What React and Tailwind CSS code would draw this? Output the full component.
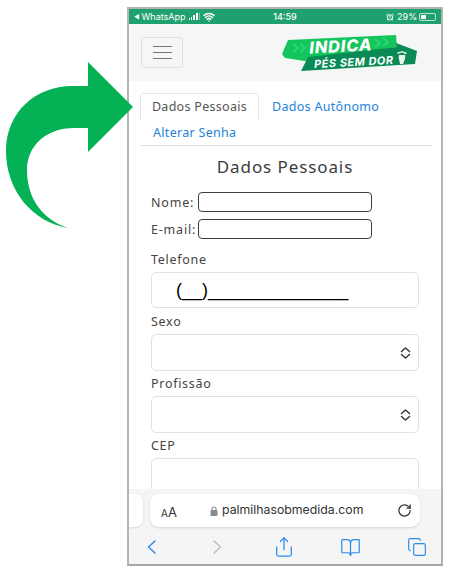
import { Share, BookOpen, Copy, RotateCw, Wifi, AlarmClock } from 'lucide-react';

function CurvedArrow() {
  return (
    <svg width="128" height="240" viewBox="0 0 128 240" className="block overflow-visible">
      <path
        d="M88 62 L133 107 L88 152 L88 128 L74 128 C46 128 27 146 27 170 C27 200 44 220 68 228 C32 222 6 190 6 151 C6 112 36 86 72 86 L88 86 Z"
        fill="#04b255"
      />
    </svg>
  );
}

function Logo() {
  return (
    <svg width="140" height="40" viewBox="280 32 140 40" className="block">
      <polygon points="282,53 288,39 396,34 397,46 305,60 285,57" fill="#12c65c" />
      <path d="M293 43 L298 47 L293 51 M300 43 L305 47 L300 51 M375 38 L380 42 L375 46 M383 37 L388 41 L383 45" fill="none" stroke="#2ed474" strokeWidth="2" />
      <polygon points="308,56 397,46 396,42 417,50 415,63 301,70" fill="#0a8a55" />
      <text x="341" y="51" textAnchor="middle" transform="rotate(-3 341 51)" fill="#fff" fontSize="16.5" fontWeight="800" fontStyle="italic" letterSpacing="0.8" fontFamily="Inter, sans-serif">INDICA</text>
      <text x="354" y="65" textAnchor="middle" transform="rotate(-3 354 65)" fill="#fff" fontSize="11" fontWeight="700" fontStyle="italic" letterSpacing="0.5" fontFamily="Inter, sans-serif">PÉS SEM DOR</text>
      <path d="M399 54 C398 58 400 60 400 63 L403 63 C404 60 406 57 405 54 Z" fill="#e8f5ee" />
      <path d="M398 52 L400 51.5 M401 51 L403 51 M404 51.5 L406 52.5" stroke="#e8f5ee" strokeWidth="1.4" strokeLinecap="round" />
    </svg>
  );
}

function StatusBar() {
  return (
    <div className="h-[15px] bg-[#1fa16f] flex items-center justify-between text-white text-[9px] pl-[5px] pr-[5px] shrink-0 font-['Inter']">
      <div className="flex items-center w-[120px]">
        <span className="text-[6px] mr-[2px]">◀</span>
        <span>WhatsApp</span>
        <span className="flex items-end gap-[1px] ml-[3px] h-[7px]">
          <span className="w-[1px] h-[2px] bg-white" />
          <span className="w-[1px] h-[3px] bg-white" />
          <span className="w-[2px] h-[5px] bg-white" />
          <span className="w-[2px] h-[7px] bg-white" />
          <span className="w-[1px] h-[7px] bg-white/40" />
        </span>
        <Wifi size={12} strokeWidth={3} className="ml-[3px]" />
      </div>
      <span className="font-medium">14:59</span>
      <div className="flex items-center justify-end w-[120px]">
        <AlarmClock size={8} strokeWidth={3} className="mr-[3px]" />
        <span>29%</span>
        <span className="ml-[2px] w-[17px] h-[8px] border border-white/70 rounded-[2px] p-[1px] flex">
          <span className="w-[5px] bg-white rounded-[1px]" />
        </span>
      </div>
    </div>
  );
}

function FieldLabel({ children }) {
  return <div className="text-[12.5px] text-[#444] tracking-[0.7px] leading-[20px] -mb-[2px] font-['Noto_Sans']">{children}</div>;
}

function SelectBox() {
  return (
    <div className="h-[37px] w-[268px] border border-[#dee2e6] rounded-[5px] bg-white flex items-center justify-end pr-[7px] mt-[4px] mb-[3px]">
      <svg width="11" height="14" viewBox="0 0 11 14" fill="none" stroke="#343a40" strokeWidth="1.6" strokeLinecap="round" strokeLinejoin="round">
        <path d="M1.5 5.5 L5.5 2 L9.5 5.5" />
        <path d="M1.5 8.5 L5.5 12 L9.5 8.5" />
      </svg>
    </div>
  );
}

function InlineField({ label }) {
  return (
    <div className="flex items-center h-[20px]">
      <span className="w-[47px] pt-[2px] text-[12.5px] text-[#444] tracking-[0.8px] font-['Noto_Sans'] whitespace-nowrap">{label}</span>
      <div className="w-[174px] h-[20px] border-[1.5px] border-[#3f3f3f] rounded-[4px] bg-white" />
    </div>
  );
}

function ToolbarSlot({ children }) {
  return <div className="w-[24px] flex items-center justify-center">{children}</div>;
}

export default function App() {
  return (
    <div className="w-[451px] h-[571px] bg-white flex overflow-hidden">
      <div className="w-[127px] shrink-0 relative z-10">
        <CurvedArrow />
      </div>
      <div className="w-[316px] h-[559px] mt-[7px] border-2 border-[#b4b4b4] border-b-[#a8a8a8] flex flex-col overflow-hidden shrink-0">
        <StatusBar />
        <div className="h-[57px] bg-[#f5f7f7] shrink-0 flex items-center pl-[12px] pr-[21px] justify-between">
          <div className="w-[42px] h-[31px] border border-[#e0e0e0] rounded-[4px] flex flex-col items-center justify-center gap-[4.5px]">
            <span className="w-[19px] h-[1.5px] bg-[#777]" />
            <span className="w-[19px] h-[1.5px] bg-[#777]" />
            <span className="w-[19px] h-[1.5px] bg-[#777]" />
          </div>
          <Logo />
        </div>
        <div className="flex-1 min-h-0 overflow-hidden pl-[11px] pr-[9px]">
          <div className="border-b border-[#dee2e6] h-[53px] mt-[12px] font-['Noto_Sans'] text-[12.5px] tracking-[0.3px]">
            <div className="flex h-[28px]">
              <div className="w-[119px] h-[28px] border border-b-0 border-[#e3e6e8] rounded-t-[4px] text-[#555] flex items-center justify-center">Dados Pessoais</div>
              <div className="ml-[13px] text-[#2483d8] flex items-center">Dados Autônomo</div>
            </div>
            <div className="pl-[13px] text-[#2483d8] h-[25px] flex items-center">Alterar Senha</div>
          </div>
          <div className="pl-[11px]">
            <h2 className="w-[268px] text-center text-[17px] text-[#3c3c3c] tracking-[0.9px] mt-[9px] leading-[24px] font-['Noto_Sans']">Dados Pessoais</h2>
            <div className="mt-[13px]">
              <InlineField label="Nome:" />
            </div>
            <div className="mt-[7px]">
              <InlineField label="E-mail:" />
            </div>
            <div className="mt-[11px]">
              <FieldLabel>Telefone</FieldLabel>
            </div>
            <div className="h-[36px] w-[268px] border border-[#dee2e6] rounded-[5px] bg-white mt-[4px] mb-[4px] flex items-center pl-[24px] text-[18px] text-black font-['Liberation_Sans'] overflow-hidden whitespace-nowrap">
              (__)______________
            </div>
            <FieldLabel>Sexo</FieldLabel>
            <SelectBox />
            <FieldLabel>Profissão</FieldLabel>
            <SelectBox />
            <FieldLabel>CEP</FieldLabel>
            <div className="h-[37px] w-[268px] border border-[#dee2e6] rounded-[5px] bg-white mt-[4px]" />
          </div>
        </div>
        <div className="h-[75px] shrink-0 bg-[#f5f5f5] flex flex-col font-['Inter']">
          <div className="flex mt-[5px] h-[33px] gap-[7px]">
            <div className="w-[14px] bg-white rounded-r-[8px] shadow-sm" />
            <div className="w-[270px] bg-white rounded-[9px] shadow-sm flex items-center pl-[11px] pr-[8px] text-[#333]">
              <span className="w-[49px] leading-none">
                <span className="text-[10px]">A</span>
                <span className="text-[13px]">A</span>
              </span>
              <svg width="8" height="10" viewBox="0 0 8 10" className="mr-[4px]">
                <rect x="0.5" y="4" width="7" height="6" rx="1" fill="#8a8a8a" />
                <path d="M2 4.5 V3 a2 2 0 0 1 4 0 V4.5" fill="none" stroke="#8a8a8a" strokeWidth="1.1" />
              </svg>
              <span className="text-[12.3px] flex-1">palmilhasobmedida.com</span>
              <RotateCw size={15} />
            </div>
          </div>
          <div className="flex-1 flex items-center justify-between pt-[3px] pl-[10px] pr-[12px] text-[#2d8ce8]">
            <ToolbarSlot>
              <svg width="9" height="14" viewBox="0 0 9 14" fill="none" stroke="currentColor" strokeWidth="1.5" strokeLinecap="round" strokeLinejoin="round">
                <path d="M8 1 L1.5 7 L8 13" />
              </svg>
            </ToolbarSlot>
            <ToolbarSlot>
              <svg width="9" height="14" viewBox="0 0 9 14" fill="none" stroke="#bdbdbd" strokeWidth="1.5" strokeLinecap="round" strokeLinejoin="round">
                <path d="M1 1 L7.5 7 L1 13" />
              </svg>
            </ToolbarSlot>
            <ToolbarSlot><Share size={22} strokeWidth={1.4} /></ToolbarSlot>
            <ToolbarSlot><BookOpen size={21} strokeWidth={1.4} /></ToolbarSlot>
            <ToolbarSlot><Copy size={20} strokeWidth={1.4} /></ToolbarSlot>
          </div>
        </div>
      </div>
    </div>
  );
}
